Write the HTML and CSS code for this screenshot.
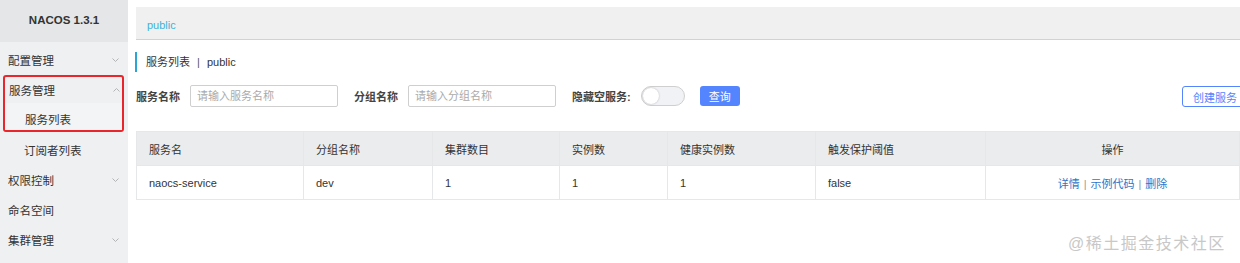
FILE: index.html
```html
<!DOCTYPE html>
<html>
<head>
    <meta charset="UTF-8">
    <title>Nacos</title>
    <link rel="stylesheet" href="styles.css">
</head>
<body>
    <div class="sidebar">
        <div class="logo">NACOS 1.3.1</div>
        <div class="menu-item">配置管理<svg class="arrow" width="7" height="4" viewBox="0 0 7 4"><polyline points="0.5,0.5 3.5,3.5 6.5,0.5"/></svg></div>
        <div class="marked">
            <div class="menu-item">服务管理<svg class="arrow" width="7" height="4" viewBox="0 0 7 4"><polyline points="0.5,3.5 3.5,0.5 6.5,3.5"/></svg></div>
            <div class="menu-item sub active">服务列表</div>
        </div>
        <div class="menu-item sub">订阅者列表</div>
        <div class="menu-item">权限控制<svg class="arrow" width="7" height="4" viewBox="0 0 7 4"><polyline points="0.5,0.5 3.5,3.5 6.5,0.5"/></svg></div>
        <div class="menu-item">命名空间</div>
        <div class="menu-item">集群管理<svg class="arrow" width="7" height="4" viewBox="0 0 7 4"><polyline points="0.5,0.5 3.5,3.5 6.5,0.5"/></svg></div>
    </div>

    <div class="main">
        <div class="crumb">public</div>
        <div class="title">服务列表 <span class="sep">|</span> public</div>

        <div class="toolbar">
            <span class="label">服务名称</span>
            <input type="text" class="field" placeholder="请输入服务名称">
            <span class="label">分组名称</span>
            <input type="text" class="field" placeholder="请输入分组名称">
            <span class="label">隐藏空服务:</span>
            <span class="switch"><span class="knob"></span></span>
            <button class="btn-primary">查询</button>
            <button class="btn-outline">创建服务</button>
        </div>

        <table class="services">
            <thead>
                <tr>
                    <th class="c1">服务名</th>
                    <th class="c2">分组名称</th>
                    <th class="c3">集群数目</th>
                    <th class="c4">实例数</th>
                    <th class="c5">健康实例数</th>
                    <th class="c6">触发保护阈值</th>
                    <th class="ops">操作</th>
                </tr>
            </thead>
            <tbody>
                <tr>
                    <td>naocs-service</td>
                    <td>dev</td>
                    <td>1</td>
                    <td>1</td>
                    <td>1</td>
                    <td>false</td>
                    <td class="ops">
                        <a href="#">详情</a><span class="bar">|</span><a href="#">示例代码</a><span class="bar">|</span><a href="#">删除</a>
                    </td>
                </tr>
            </tbody>
        </table>
    </div>

    <div class="watermark">@稀土掘金技术社区</div>
</body>
</html>
```

FILE: styles.css
```css
body {
    margin: 0;
    display: flex;
    height: 263px;
    overflow: hidden;
    font-family: "Liberation Sans", "Noto Sans CJK SC", sans-serif;
    font-size: 11px;
    color: #333;
    background-color: #fff;
}

.sidebar {
    width: 128px;
    flex-shrink: 0;
    background-color: #eef0f2;
    font-size: 11.5px;
}

.logo {
    height: 42px;
    line-height: 40px;
    text-align: center;
    font-weight: bold;
    font-size: 11.5px;
    color: #333;
    background-color: #e4e6e8;
    margin-bottom: 3px;
}

.menu-item {
    position: relative;
    height: 30px;
    line-height: 32px;
    padding-left: 8px;
    color: #333;
}

.menu-item.sub {
    padding-left: 24px;
}

.arrow {
    position: absolute;
    right: 9px;
    top: 13px;
    fill: none;
    stroke: #b4b4b4;
    stroke-width: 1;
}

.marked {
    margin: 0 4px 3px 3px;
    border: 2px solid #e8262c;
    border-radius: 3px;
    height: 53px;
}

.marked .menu-item {
    padding-left: 4px;
    line-height: 28px;
    height: 26px;
}

.marked .menu-item.sub {
    padding-left: 20px;
    height: 27px;
    line-height: 34px;
    background-color: #f3f4f5;
}

.marked .arrow {
    right: 2px;
    top: 11px;
}

.main {
    flex: 1;
    padding: 7px 0 0 8px;
    min-width: 0;
}

.crumb {
    height: 32px;
    line-height: 37px;
    padding-left: 11px;
    color: #3fb2d8;
    background-color: #f0f0f0;
    border-bottom: 1px solid #d2d2d2;
}

.title {
    margin: 12px 0 0 -1px;
    height: 20px;
    line-height: 20px;
    padding-left: 9px;
    border-left: 2px solid #2ba4d6;
}

.title .sep {
    margin: 0 4px;
    color: #555;
}

.toolbar {
    display: flex;
    align-items: center;
    margin-top: 13px;
    height: 22px;
}

.label {
    color: #444;
    font-weight: bold;
    margin-right: 10px;
}

.field {
    width: 148px;
    height: 22px;
    box-sizing: border-box;
    border: 1px solid #cfcfcf;
    border-radius: 2px;
    padding: 0 6px;
    margin-right: 16px;
    font-family: inherit;
    font-size: 11px;
}

.field::placeholder {
    color: #aaa;
}

.switch {
    width: 44px;
    height: 20px;
    box-sizing: border-box;
    border: 1px solid #cfcfcf;
    border-radius: 10px;
    background-color: #f1f2f5;
    margin-left: 0;
    margin-right: 15px;
    position: relative;
}

.knob {
    position: absolute;
    left: 1px;
    top: 1px;
    width: 16px;
    height: 16px;
    border-radius: 50%;
    background-color: #fff;
    box-shadow: 0 0 2px rgba(0, 0, 0, 0.25);
}

.btn-primary {
    width: 40px;
    height: 20px;
    border: none;
    border-radius: 3px;
    background-color: #5584ff;
    color: #fff;
    font-family: inherit;
    font-size: 11px;
    padding: 0;
}

.btn-outline {
    margin-left: auto;
    margin-right: -8px;
    width: 66px;
    height: 21px;
    border: 1px solid #5584ff;
    border-radius: 3px;
    background-color: #fff;
    color: #5584ff;
    font-family: inherit;
    font-size: 11px;
    padding: 0;
    margin-top: 1px;
}

.services {
    margin-top: 24px;
    width: 1104px;
    border-collapse: collapse;
    table-layout: fixed;
}

.services th,
.services td {
    box-sizing: border-box;
    height: 34px;
    padding: 0 12px;
    text-align: left;
    border: 1px solid #e6e7e9;
    font-weight: normal;
    white-space: nowrap;
}

.services th {
    background-color: #ebecee;
    color: #333;
}

.services .ops {
    text-align: center;
}

.c1 { width: 167px; }
.c2 { width: 129px; }
.c3 { width: 127px; }
.c4 { width: 108px; }
.c5 { width: 148px; }
.c6 { width: 170px; }

.services a {
    color: #2f74c9;
    text-decoration: none;
}

.services .bar {
    margin: 0 4px;
    color: #999;
}

.watermark {
    position: absolute;
    left: 1068px;
    top: 230px;
    font-size: 16px;
    color: #c8c8c8;
    letter-spacing: 1.5px;
}
```
